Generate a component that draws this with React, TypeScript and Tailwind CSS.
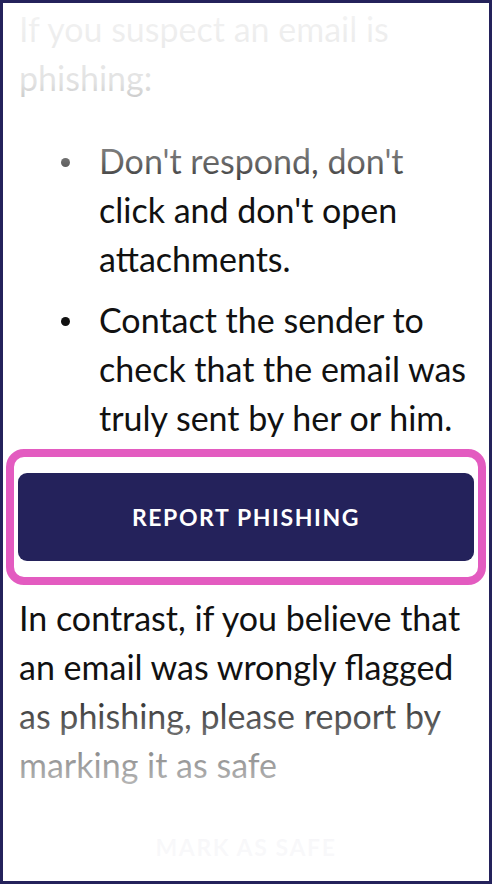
import React from "react";

const ITEMS = [
  "Don't respond, don't click and don't open attachments.",
  "Contact the sender to check that the email was truly sent by her or him.",
];

export default function App() {
  return (
    <div className="relative h-[884px] w-[492px] overflow-hidden border-[3px] border-[#24225b] bg-white font-['Lato','Open_Sans',sans-serif] text-[34px] leading-[49px] text-[#111]">
      <div className="flex flex-col px-[16px] pt-[1px]">
        <p>If you suspect an email is phishing:</p>

        <ul className="mt-[34px] flex flex-col gap-[12px]">
          {ITEMS.map((t) => (
            <li key={t} className="flex">
              <span className="flex h-[49px] w-[80px] shrink-0 items-center pl-[42px]">
                <span className="mt-[3px] h-[9px] w-[9px] rounded-full bg-[#111]" />
              </span>
              <span>{t}</span>
            </li>
          ))}
        </ul>

        {/* focused button keeps the pink focus ring */}
        <div className="-mx-[13px] mt-[7px] rounded-[18px] border-[8px] border-[#e35bc0] px-[4px] py-[16px]">
          <button className="flex h-[88px] w-full items-center justify-center rounded-[9px] bg-[#24225b] text-[23px] font-bold tracking-[1.6px] text-white">
            REPORT PHISHING
          </button>
        </div>

        <p className="mt-[8px]">
          In contrast, if you believe that an email was wrongly flagged as phishing, please report by
          marking it as safe
        </p>

        <button className="mt-[14px] flex h-[88px] w-full items-center justify-center text-[23px] font-bold tracking-[1.6px] text-[#24225b]">
          MARK AS SAFE
        </button>
      </div>

      <div className="pointer-events-none absolute inset-x-0 top-0 h-[200px] bg-[linear-gradient(to_bottom,rgba(255,255,255,0.96)_0px,rgba(255,255,255,0.88)_80px,rgba(255,255,255,0.38)_158px,rgba(255,255,255,0)_195px)]" />
      <div className="pointer-events-none absolute inset-x-0 bottom-0 h-[205px] bg-[linear-gradient(to_bottom,rgba(255,255,255,0)_0px,rgba(255,255,255,0.25)_40px,rgba(255,255,255,0.55)_80px,rgba(255,255,255,0.97)_165px)]" />
    </div>
  );
}
